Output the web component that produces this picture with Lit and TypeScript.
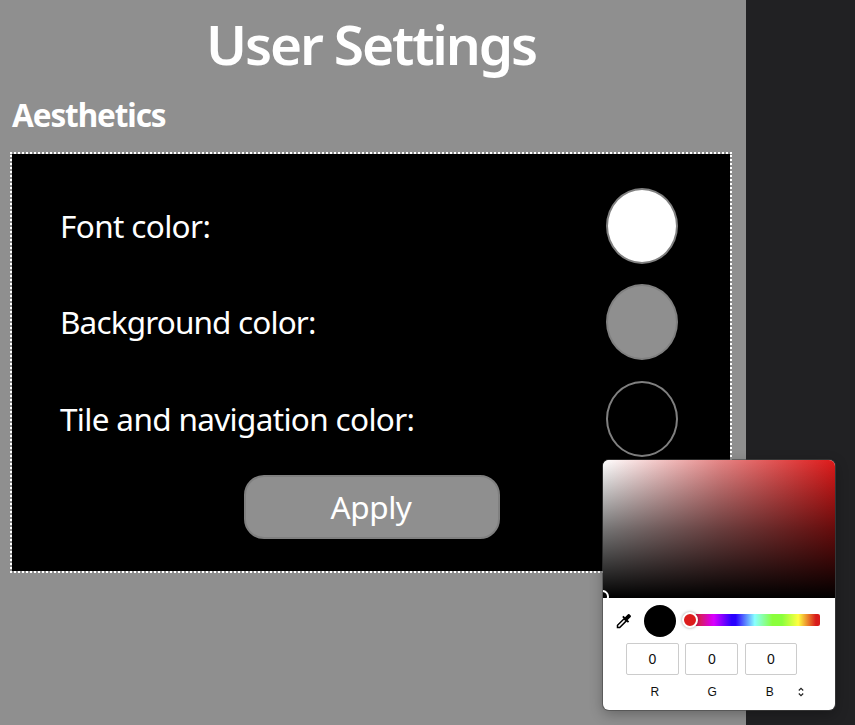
import { LitElement, html, css } from "lit";
import { customElement, property } from "lit/decorators.js";

@customElement("color-popup")
class ColorPopup extends LitElement {
  static styles = css`
    :host {
      display: block;
      width: 232px;
      height: 250px;
      border-radius: 6px;
      background: #fff;
      overflow: hidden;
      box-shadow: 0 0 0 1px rgba(70, 70, 70, 0.6), 0 4px 14px rgba(0, 0, 0, 0.3);
      color: #101010;
      font: 14px/16px "Liberation Sans", Arial, sans-serif;
    }
    .field {
      height: 138px;
      overflow: hidden;
      background: linear-gradient(to top, #000, rgba(0, 0, 0, 0.54) 50%, transparent),
        linear-gradient(to right, #fff, #e58686 50%, #de1a1a);
    }
    .cursor {
      box-sizing: border-box;
      width: 13px;
      height: 13px;
      margin: 130px 0 0 -7px;
      border: 2px solid #fff;
      border-radius: 50%;
    }
    .tools {
      display: flex;
      align-items: center;
      height: 45px;
      padding-left: 13px;
    }
    .dropper {
      display: block;
      width: 16px;
      height: 16px;
    }
    .current {
      width: 32px;
      height: 32px;
      margin-left: 12px;
      border-radius: 50%;
      background: #000;
    }
    .hue {
      display: flex;
      align-items: center;
      width: 136px;
      height: 12px;
      margin: -2px 0 0 8px;
      border-radius: 2px;
      background: linear-gradient(to right, #d81b1b 3%, #d81b60 12%, #d800e8 20%, #d800ff 22%,
        #2a00ff 35%, #2a00ff 38%, #8ff 52%, #8aff3c 65%, #8aff3c 72%, #ffff40 84%, #d81b1b 97%);
    }
    .thumb {
      box-sizing: border-box;
      width: 16px;
      height: 16px;
      margin-left: -2px;
      border: 2px solid #fff;
      border-radius: 50%;
      background: #dc1c1c;
      box-shadow: 0 0 3px rgba(0, 0, 0, 0.4);
    }
    .values {
      display: flex;
      gap: 6.4px;
      padding-left: 23px;
    }
    .value {
      box-sizing: border-box;
      width: 53px;
      height: 32px;
      border: 1px solid #ccc;
      border-radius: 2px;
      line-height: 31px;
      text-align: center;
    }
    .value:last-child {
      width: 52px;
    }
    .labels {
      display: flex;
      align-items: center;
      padding: 9px 0 0 23px;
      font-size: 12px;
    }
    .label {
      width: 57.5px;
      text-align: center;
    }
    .arrows {
      width: 6px;
      height: 10px;
      margin-left: -1px;
    }
  `;

  render() {
    return html`
      <div class="field"><div class="cursor"></div></div>
      <div class="tools">
        <svg class="dropper" viewBox="0 0 16 16">
          <path d="M1.500 14.500v-2.200l6.600-6.600 2.200 2.200-6.600 6.600z" fill="#fff" stroke="#000" stroke-width="1.500" />
          <path d="M6.200 4.100l5.700 5.700 1.300-1.300-1.500-1.500 3-3q.700-.7 0-1.400l-1.300-1.300q-.7-.7-1.400 0l-3 3-1.500-1.500z" />
        </svg>
        <div class="current"></div>
        <div class="hue"><div class="thumb"></div></div>
      </div>
      <div class="values">${[0, 0, 0].map((v) => html`<div class="value">${v}</div>`)}</div>
      <div class="labels">
        ${["R", "G", "B"].map((c) => html`<div class="label">${c}</div>`)}
        <svg class="arrows" viewBox="0 0 6 10" fill="none" stroke="#222" stroke-width="1.200">
          <path d="M.8 3.500L3 1.300l2.200 2.200M.8 6.500L3 8.700l2.200-2.200" />
        </svg>
      </div>
    `;
  }
}

@customElement("color-row")
class ColorRow extends LitElement {
  @property() label = "";
  @property() color = "";
  @property({ type: Number }) tracking = 0;

  static styles = css`
    :host {
      display: flex;
      align-items: center;
      justify-content: space-between;
      height: 76px;
    }
    .label {
      padding-bottom: 1px;
    }
    .swatch {
      box-sizing: border-box;
      width: 72px;
      height: 76px;
      border: 2px solid #808080;
      border-radius: 50%;
    }
  `;

  render() {
    return html`<span class="label" style="letter-spacing:${this.tracking}px">${this.label}</span>
      <div class="swatch" style="background:${this.color}"></div>`;
  }
}

@customElement("app-root")
class AppRoot extends LitElement {
  static styles = css`
    :host {
      display: flex;
      position: relative;
      height: 725px;
      overflow: hidden;
      background: #212123;
      color: #fff;
      font-family: "Noto Sans", "Open Sans", sans-serif;
    }
    .page {
      box-sizing: border-box;
      width: 746px;
      padding: 0 14px 0 10px;
      background: #8f8f8f;
    }
    h1 {
      margin: 6px 0 0;
      font-size: 55px;
      font-weight: 600;
      line-height: 75px;
      letter-spacing: -2.15px;
      text-align: center;
    }
    h2 {
      margin: 12px 0 0 2px;
      height: 59px;
      font-size: 31.5px;
      font-weight: 700;
      line-height: 43px;
      letter-spacing: -1.1px;
    }
    .tile {
      box-sizing: border-box;
      display: flex;
      flex-direction: column;
      height: 421px;
      padding: 34px 52px 0 48px;
      border: 2px dotted #fff;
      background: #000 padding-box;
      font-size: 31.5px;
    }
    .rows {
      display: flex;
      flex-direction: column;
      gap: 20.4px;
    }
    .apply {
      box-sizing: border-box;
      align-self: center;
      width: 256px;
      height: 64px;
      margin: 18.2px 0 0 6px;
      border: 2px solid #808080;
      border-radius: 20px;
      background: #8f8f8f;
      color: #fff;
      font: inherit;
      letter-spacing: -0.4px;
      line-height: 60px;
      padding: 0 2px 0 0;
    }
    color-popup {
      position: absolute;
      left: 603px;
      top: 460px;
    }
  `;

  render() {
    return html`
      <main class="page">
        <h1>User Settings</h1>
        <h2>Aesthetics</h2>
        <section class="tile">
          <div class="rows">
            <color-row label="Font color:" color="#fff" tracking="-0.64"></color-row>
            <color-row label="Background color:" color="#8f8f8f" tracking="-0.86"></color-row>
            <color-row label="Tile and navigation color:" color="#000" tracking="-0.67"></color-row>
          </div>
          <button class="apply">Apply</button>
        </section>
      </main>
      <color-popup></color-popup>
    `;
  }
}
